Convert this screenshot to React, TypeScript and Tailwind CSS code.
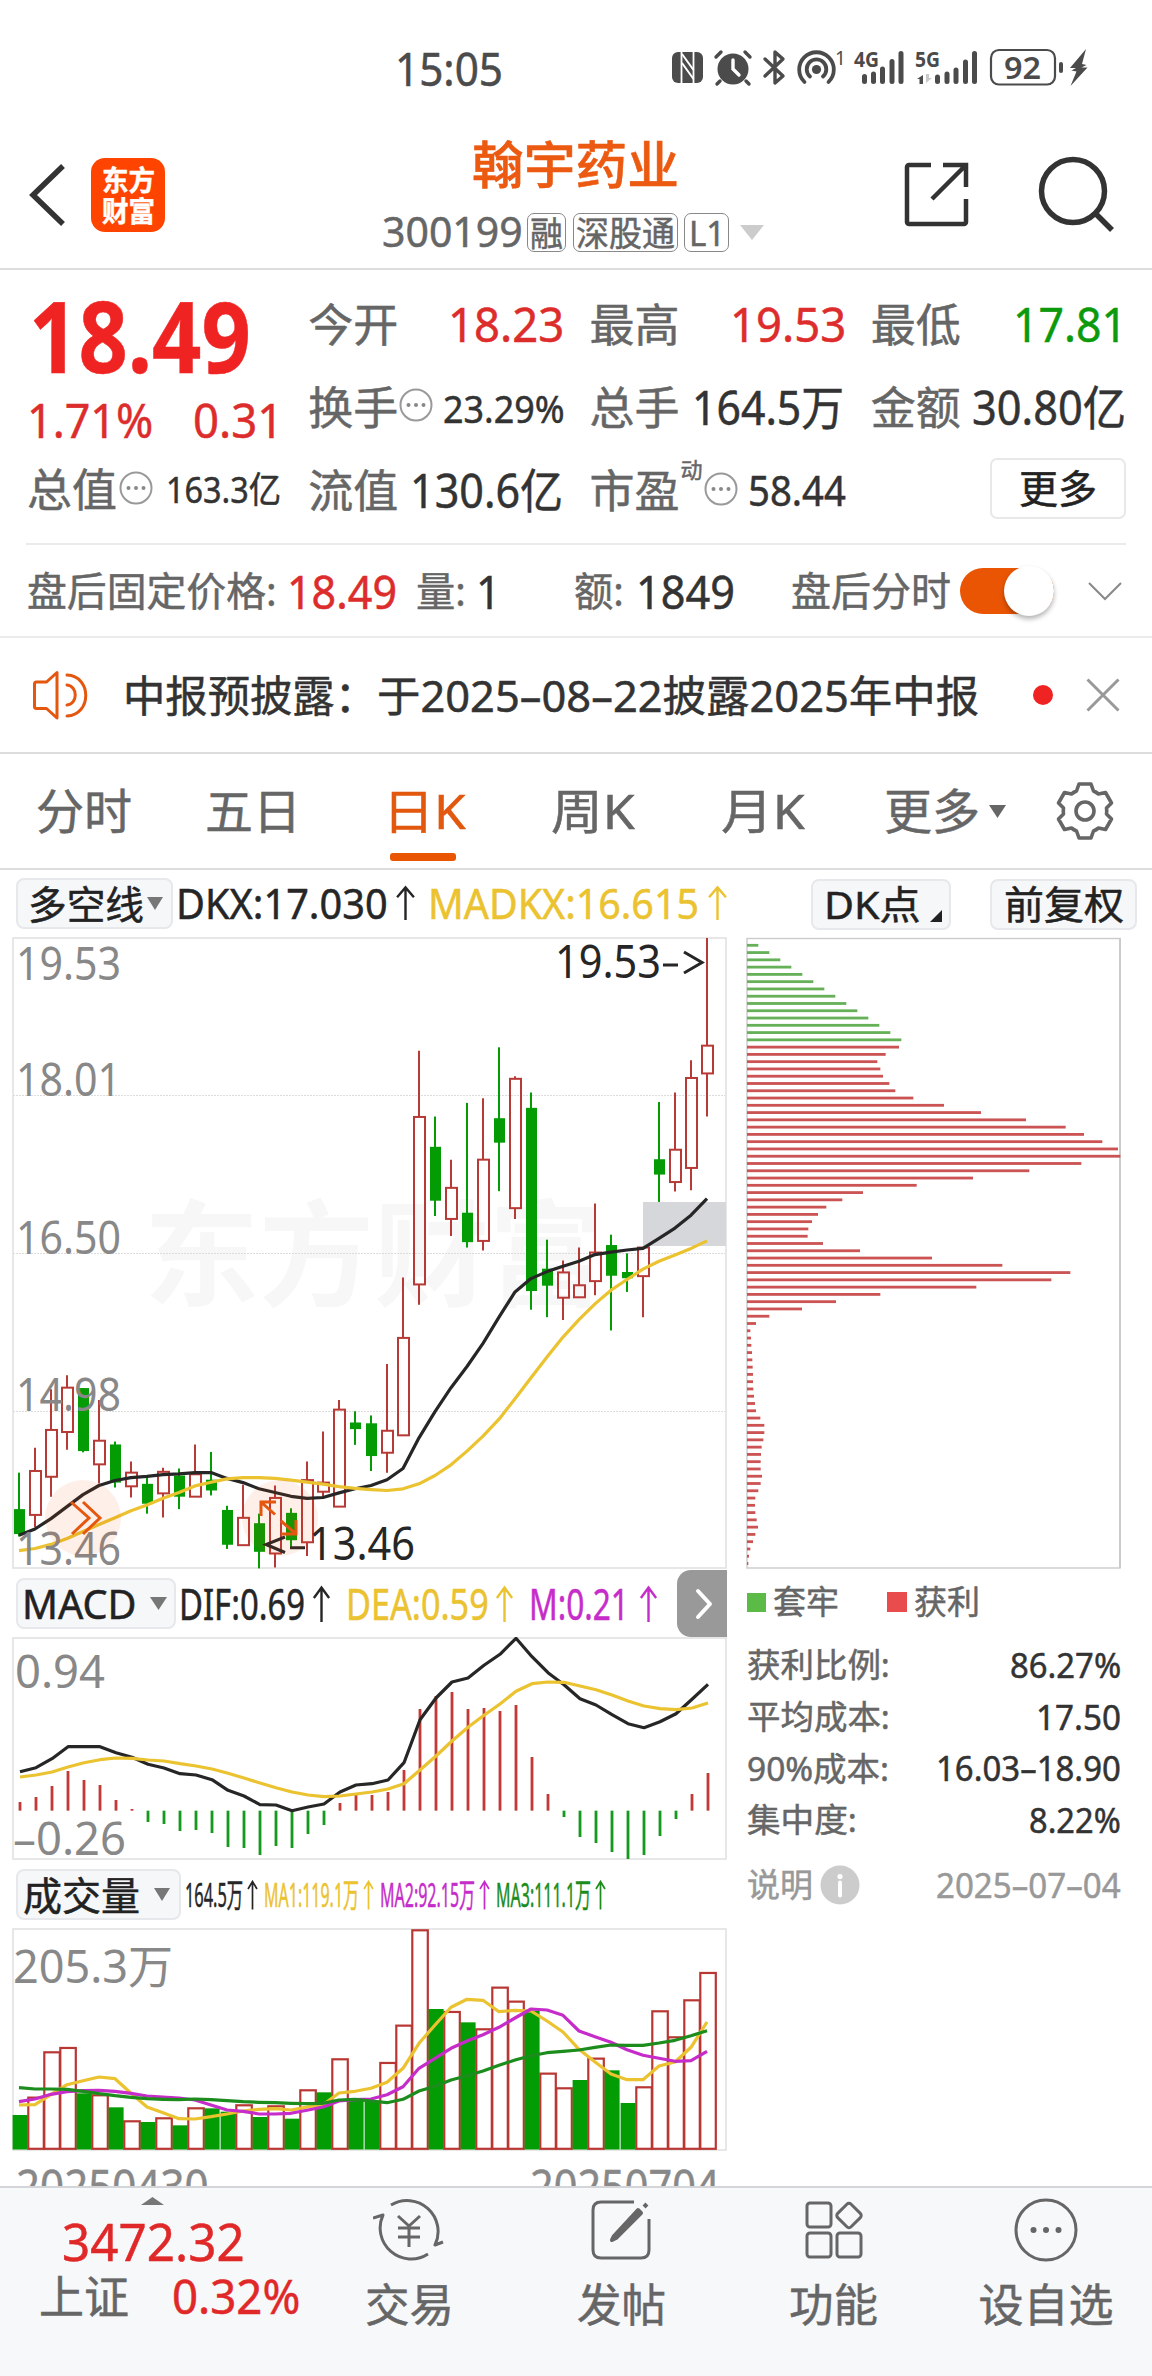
import { useLayoutEffect, useRef, useState } from 'react';
import type { ReactNode } from 'react';

/** Single-line text squeezed or stretched to a given width, so figures always fill their slot. */
function Fit({ w, className = '', children }: { w: number; className?: string; children: ReactNode }) {
  const ref = useRef<HTMLSpanElement>(null);
  const [scale, setScale] = useState(1);
  useLayoutEffect(() => {
    if (ref.current) setScale(w / ref.current.offsetWidth);
  }, [w]);
  return (
    <span className={`inline-block shrink-0 leading-none whitespace-nowrap ${className}`} style={{ width: w }}>
      <span ref={ref} className="inline-block origin-left leading-none" style={{ transform: `scaleX(${scale})` }}>
        {children}
      </span>
    </span>
  );
}

const RED = '#b83a36';
const GREEN = '#049c04';
const YELLOW = '#ebc22f';
const PURPLE = '#c62cc9';
const INK = '#262626';

/* ---------- price chart ---------- */

type Candle = [up: 0 | 1, high: number, low: number, top: number, bottom: number];
const candles: Candle[] = [
  [0, 1309, 1463, 1397, 1457], [1, 1249, 1440, 1305, 1411], [1, 1108, 1367, 1206, 1319], [1, 1074, 1254, 1104, 1211],
  [0, 1105, 1260, 1105, 1257], [1, 1134, 1335, 1232, 1289], [0, 1234, 1345, 1241, 1333], [1, 1282, 1369, 1309, 1342],
  [0, 1320, 1408, 1336, 1384], [1, 1297, 1417, 1307, 1359], [0, 1299, 1397, 1316, 1367], [1, 1241, 1367, 1313, 1367],
  [0, 1259, 1364, 1326, 1352], [0, 1389, 1493, 1399, 1483], [1, 1338, 1484, 1418, 1484], [0, 1408, 1540, 1431, 1500],
  [1, 1340, 1538, 1370, 1504], [0, 1395, 1488, 1406, 1472], [1, 1282, 1510, 1327, 1477], [1, 1210, 1369, 1333, 1355],
  [1, 1134, 1391, 1157, 1391], [0, 1161, 1242, 1188, 1204], [0, 1171, 1305, 1190, 1269], [1, 1047, 1309, 1208, 1261],
  [1, 838, 1219, 984, 1219], [1, 291, 904, 451, 855], [0, 450, 690, 523, 653], [1, 554, 738, 622, 697],
  [0, 417, 766, 682, 753], [1, 406, 773, 554, 750], [0, 283, 630, 454, 513], [1, 353, 697, 359, 671],
  [0, 392, 916, 429, 871], [0, 747, 934, 817, 858], [1, 797, 941, 826, 887], [1, 766, 886, 857, 886],
  [1, 660, 881, 778, 847], [0, 735, 966, 760, 834], [0, 780, 873, 825, 840], [1, 766, 934, 766, 835],
  [0, 415, 656, 553, 590], [1, 392, 631, 530, 608], [1, 314, 628, 357, 574], [1, 19, 450, 279, 346],
];
const dkx = [1460, 1445, 1420, 1391, 1362, 1340, 1328, 1321, 1318, 1314, 1312, 1309, 1309, 1323, 1333, 1348, 1357, 1366, 1371, 1369, 1358, 1348, 1340, 1326, 1299, 1225, 1162, 1104, 1053, 997, 934, 873, 841, 824, 811, 799, 783, 777, 772, 768, 744, 719, 688, 648];
const madkx = [1497, 1492, 1482, 1468, 1451, 1434, 1418, 1401, 1387, 1371, 1357, 1341, 1332, 1324, 1321, 1321, 1323, 1327, 1332, 1337, 1343, 1347, 1350, 1352, 1348, 1336, 1316, 1290, 1257, 1221, 1180, 1131, 1080, 1030, 982, 940, 902, 869, 843, 818, 799, 784, 768, 750];

const line = (vals: number[], x0: number, y: (v: number) => number) =>
  vals.map((v, i) => `${x0 + 16 * i},${y(v).toFixed(1)}`).join(' ');
const priceY = (v: number) => 930 + v / 2.4123;

function AxisLabel({ x, y, w, size = 45, fill = '#888', children }: { x: number; y: number; w: number; size?: number; fill?: string; children: string }) {
  return (
    <text x={x} y={y} fontSize={size} fill={fill} textLength={w} lengthAdjust="spacingAndGlyphs">
      {children}
    </text>
  );
}

function PriceChart() {
  return (
    <svg className="block h-[634px] w-[738px]" viewBox="0 936 738 634">
      <text x={144} y={1297} fontSize={115} fontWeight={700} fill="#f7f7f7" stroke="none" textLength={460} lengthAdjust="spacingAndGlyphs">
        东方财富
      </text>
      {[1095.5, 1253.5, 1411.5].map((y) => (
        <line key={y} x1={13} x2={725} y1={y} y2={y} stroke="#dcdcdc" strokeDasharray="2 1" />
      ))}
      <rect x={13} y={938} width={713} height={630} fill="none" stroke="#e2e2e2" strokeWidth={1.6} />
      <rect x={643} y={1202} width={83} height={44} fill="#d5d7db" />
      {candles.map(([up, hi, lo, top, bot], i) => {
        const x = 19 + 16 * i;
        return up ? (
          <g key={i} stroke={RED} strokeWidth={2}>
            <line x1={x} x2={x} y1={priceY(hi)} y2={priceY(top)} />
            <line x1={x} x2={x} y1={priceY(bot)} y2={priceY(lo)} />
            <rect x={x - 5} y={priceY(top)} width={11} height={priceY(bot) - priceY(top)} fill="#fff" fillOpacity={0} />
          </g>
        ) : (
          <g key={i} fill={GREEN}>
            <rect x={x - 1} y={priceY(hi)} width={2} height={priceY(lo) - priceY(hi)} />
            <rect x={x - 5} y={priceY(top)} width={11} height={priceY(bot) - priceY(top)} />
          </g>
        );
      })}
      <polyline points={line(dkx, 19, priceY)} fill="none" stroke={INK} strokeWidth={3.2} strokeLinejoin="round" />
      <polyline points={line(madkx, 19, priceY)} fill="none" stroke={YELLOW} strokeWidth={3.2} strokeLinejoin="round" />
      <AxisLabel x={16} y={980} w={105}>19.53</AxisLabel>
      <AxisLabel x={16} y={1096} w={105}>18.01</AxisLabel>
      <AxisLabel x={16} y={1254} w={105}>16.50</AxisLabel>
      <AxisLabel x={16} y={1411} w={105}>14.98</AxisLabel>
      <AxisLabel x={16} y={1565} w={105}>13.46</AxisLabel>
      <AxisLabel x={555} y={978} w={106} fill={INK}>19.53</AxisLabel>
      <AxisLabel x={309} y={1560} w={106} fill={INK}>13.46</AxisLabel>
      <g fill="none" stroke={INK} strokeWidth={3}>
        <path d="M663 965h15M684 952l18 10.5-18 10.5" />
        <path d="M305 1547.7h-15M285 1537l-19 7.5 19 8" />
      </g>
      <circle cx={83} cy={1518} r={38} fill="#f04a00" fillOpacity={0.09} />
      <circle cx={280} cy={1518} r={38} fill="#f04a00" fillOpacity={0.09} />
      <g fill="none" stroke="#e5570f" strokeWidth={3}>
        <path d="M71 1502l18 16-17 16M83 1502l17 16-17 16" />
        <path d="M261 1516v-14h15M261 1502l14 12.5M296 1520v14h-15M296 1534l-15-13" />
      </g>
    </svg>
  );
}

/* ---------- MACD ---------- */

const macdY = (v: number) => 1560 + v / 3;
const macdBars = [726, 711, 678, 633, 660, 675, 720, 747, 786, 792, 813, 810, 819, 861, 864, 885, 858, 864, 822, 795, 729, 702, 705, 696, 630, 447, 408, 396, 447, 444, 453, 435, 591, 702, 771, 831, 849, 876, 897, 885, 828, 777, 702, 639];
const dif = [635, 623, 596, 560, 560, 560, 578, 592, 613, 624, 641, 645, 659, 691, 708, 734, 735, 752, 741, 732, 696, 675, 671, 660, 608, 479, 414, 366, 354, 316, 283, 235, 290, 338, 374, 416, 435, 464, 491, 503, 485, 461, 418, 373];
const dea = [651, 645, 636, 621, 608, 599, 594, 595, 600, 603, 611, 618, 627, 640, 654, 669, 683, 696, 705, 710, 708, 702, 696, 687, 671, 630, 588, 543, 502, 466, 432, 394, 371, 366, 367, 378, 389, 405, 423, 438, 446, 449, 444, 429];

function MacdChart() {
  const zero = 752;
  return (
    <svg className="block h-[224px] w-[738px]" viewBox="0 1637 738 224">
      <rect x={13} y={1638} width={713} height={221} fill="none" stroke="#e2e2e2" strokeWidth={1.6} />
      <AxisLabel x={15} y={1688} w={90} size={46}>0.94</AxisLabel>
      <text x={13} y={1854.5} fontSize={46} fill="#888" textLength={23} lengthAdjust="spacingAndGlyphs">–</text>
      <AxisLabel x={36} y={1854.5} w={90} size={46}>0.26</AxisLabel>
      {macdBars.map((v, i) => {
        const up = v < zero;
        return (
          <rect key={i} x={18.6 + 16 * i} width={2.8} y={macdY(Math.min(v, zero))} height={Math.abs(v - zero) / 3} fill={up ? '#c23a36' : '#159a1b'} />
        );
      })}
      <polyline points={line(dif, 20, macdY)} fill="none" stroke={INK} strokeWidth={3.2} strokeLinejoin="round" />
      <polyline points={line(dea, 20, macdY)} fill="none" stroke={YELLOW} strokeWidth={3.2} strokeLinejoin="round" />
    </svg>
  );
}

/* ---------- volume ---------- */

const volY = (v: number) => 1860 + v / 3;
const volumes: [up: 0 | 1, top: number][] = [
  [0, 765], [1, 712], [1, 576], [1, 563], [0, 700], [1, 705], [0, 742], [1, 783], [0, 786], [1, 774], [0, 796],
  [1, 744], [0, 745], [0, 755], [1, 735], [0, 771], [1, 738], [0, 776], [1, 690], [0, 697], [1, 597], [0, 718],
  [0, 722], [1, 608], [1, 496], [1, 210], [0, 447], [1, 455], [0, 487], [1, 507], [1, 382], [1, 424], [0, 452],
  [1, 640], [1, 684], [0, 660], [1, 595], [0, 631], [0, 729], [1, 681], [1, 453], [1, 531], [1, 420], [1, 338],
];
const ma1 = [735, 734, 703, 674, 662, 651, 656, 700, 741, 758, 776, 777, 770, 762, 753, 748, 746, 750, 741, 734, 699, 694, 685, 667, 625, 550, 495, 442, 418, 421, 455, 451, 453, 483, 516, 568, 606, 642, 659, 659, 618, 606, 562, 486];
const ma2 = [725, 717, 703, 695, 692, 691, 694, 700, 708, 711, 714, 720, 735, 750, 754, 762, 762, 760, 751, 741, 723, 719, 717, 704, 680, 625, 595, 565, 543, 524, 502, 474, 447, 450, 466, 513, 530, 547, 569, 586, 595, 604, 602, 574];
const ma3 = [683, 687, 687, 688, 694, 701, 707, 712, 716, 718, 719, 717, 719, 722, 725, 727, 728, 730, 731, 730, 720, 718, 723, 728, 718, 693, 679, 660, 647, 633, 616, 600, 587, 578, 574, 570, 562, 555, 556, 556, 549, 541, 527, 512];

function VolumeChart() {
  return (
    <svg className="block h-[224px] w-[738px]" viewBox="0 1928 738 224">
      <rect x={13} y={1929} width={713} height={221} fill="none" stroke="#e2e2e2" strokeWidth={1.6} />
      <AxisLabel x={13} y={1983} w={160} size={46}>205.3万</AxisLabel>
      {volumes.map(([up, v], i) => {
        const x = 19.8 + 16 * i;
        return up ? (
          <rect key={i} x={x - 7.5} y={volY(v) + 0.3} width={15.5} height={2148.5 - volY(v)} fill="#fff" stroke="#b93733" strokeWidth={2.2} />
        ) : (
          <rect key={i} x={x - 7.2} y={volY(v)} width={15} height={2149.5 - volY(v)} fill={GREEN} />
        );
      })}
      <g fill="none" strokeWidth={3.2} strokeLinejoin="round">
        <polyline points={line(ma1, 19, volY)} stroke={YELLOW} />
        <polyline points={line(ma2, 19, volY)} stroke={PURPLE} />
        <polyline points={line(ma3, 19, volY)} stroke="#1c8c1c" />
      </g>
    </svg>
  );
}

/* ---------- cost distribution ---------- */

const lossBars = [84, 117, 150, 183, 216, 249, 282, 315, 348, 381, 414, 447, 480, 513];
const gainBars = [
  506, 466, 441, 450, 458, 477, 495, 549, 641, 752, 887, 1006, 1061, 1116, 1163, 1170, 1053, 897, 728, 559, 398, 336, 288, 263,
  245, 234, 232, 278, 389, 605, 816, 1020, 963, 738, 450, 317, 215, 117, 77, 60, 62, 63, 65, 66, 67, 68, 68, 69, 71, 74, 77, 90,
  102, 102, 99, 94, 92, 91, 91, 95, 91, 84, 75, 74, 75, 79, 83, 75, 68, 60, 56, 54,
];

function CostChart() {
  return (
    <svg className="block h-[634px] w-[414px]" viewBox="738 936 414 634">
      <rect x={747} y={938.5} width={373} height={629.5} fill="none" stroke="#cbcbcb" strokeWidth={1.4} />
      <line x1={1120} x2={1120} y1={938} y2={1568} stroke="#cbcbcb" strokeWidth={2} />
      {[...lossBars, ...gainBars].map((v, i) => (
        <rect key={i} x={747} y={943.9 + i * 7.273} width={(v - 50) / 3} height={2.8} fill={i < lossBars.length ? '#66b058' : '#cc5353'} />
      ))}
    </svg>
  );
}

/* ---------- small glyphs ---------- */

function UpArrow({ className }: { className: string }) {
  return (
    <svg className={`shrink-0 ${className}`} viewBox="0 0 20 38" preserveAspectRatio="none" fill="none" stroke="currentColor" strokeWidth={2.4}>
      <path d="M10 37V3M2 13l8-10.5L18 13" vectorEffect="non-scaling-stroke" />
    </svg>
  );
}

function ThinArrow() {
  return (
    <svg className="ml-[4px] h-[30px] w-[11px] shrink-0" viewBox="0 0 11 30" fill="none" stroke="currentColor" strokeWidth={1.7}>
      <path d="M5.500 29.500V2M1 9l4.500-7.500L10 9" />
    </svg>
  );
}

function Down({ className }: { className: string }) {
  return (
    <svg className={`shrink-0 ${className}`} viewBox="0 0 16 12" preserveAspectRatio="none" fill="currentColor">
      <path d="M0 0h16L8 12z" />
    </svg>
  );
}

function Dots() {
  return (
    <svg className="size-[34px] shrink-0" viewBox="0 0 34 34" fill="none" stroke="#999" strokeWidth={2}>
      <circle cx={17} cy={17} r={15.5} />
      <g fill="#888" stroke="none">
        <circle cx={9.5} cy={17} r={2} />
        <circle cx={17} cy={17} r={2} />
        <circle cx={24.5} cy={17} r={2} />
      </g>
    </svg>
  );
}

function StatusIcons() {
  return (
    <svg className="h-[40px] w-[420px] overflow-visible" viewBox="670 48 420 40" fill="#4b4b4b">
      {/* NFC */}
      <rect x={672} y={52} width={31} height={31} rx={6} />
      <path d="M681.500 52v31M693.500 52v31" stroke="#fff" strokeWidth={1.8} />
      <path d="M682 54l11.500 16M682 63l11.500 16" stroke="#fff" strokeWidth={2} />
      {/* alarm */}
      <circle cx={733} cy={69} r={15.5} />
      <path d="M720 81l-3 3M746 81l3 3M716 57l5-5M750 57l-5-5" stroke="#4b4b4b" strokeWidth={3.4} strokeLinecap="round" />
      <path d="M733 60v9l6 6" stroke="#fff" strokeWidth={3.4} fill="none" strokeLinecap="round" />
      {/* bluetooth */}
      <path d="M765 59l18 17-8 7V52l8 7-18 17" stroke="#4b4b4b" strokeWidth={3.4} fill="none" strokeLinejoin="round" strokeLinecap="round" />
      {/* hotspot */}
      <circle cx={816.500} cy={69.500} r={4.600} />
      <g fill="none" stroke="#4b4b4b" strokeWidth={3.8} strokeLinecap="round">
        <path d="M810 76.500a9.800 9.800 0 1 1 13 0" />
        <path d="M804.500 82a17.300 17.300 0 1 1 24 0" />
      </g>
      <text x={835} y={65} fontSize={19}>1</text>
      {/* signals */}
      <text x={854} y={67} fontSize={22} fontWeight={700} textLength={25} lengthAdjust="spacingAndGlyphs">4G</text>
      <text x={915} y={67} fontSize={22} fontWeight={700} textLength={25} lengthAdjust="spacingAndGlyphs">5G</text>
      <g stroke="#4b4b4b" strokeWidth={5} strokeLinecap="round">
        <path d="M864.500 76.500v5M873.500 74v7.500M882.500 69v12.500M892 61.500v20M901 53.500v28" />
        <path d="M937.500 77v4.500M947 74v7.500M956 70v11.500M965.500 62v19.500M974.500 53.500v28" />
      </g>
      <path d="M919.500 84v-5h-2.500l6-4v9z" />
      <path d="M926 74v9l6-5h-3v-4z" fill="#c9c9c9" />
      {/* battery */}
      <rect x={991} y={50} width={64} height={34.500} rx={8} fill="none" stroke="#4b4b4b" strokeWidth={2.200} />
      <text x={1004} y={79} fontSize={30} fontWeight={600} textLength={37} lengthAdjust="spacingAndGlyphs">92</text>
      <rect x={1059} y={62} width={4} height={11} rx={2} />
      <path d="M1086 49l-16 19h6l-4.500 2.500 5 1-6 14.500 17-18.500h-6l5-2.500-4.500-1z" />
    </svg>
  );
}

/* ---------- page ---------- */

function Header() {
  return (
    <header className="flex h-[152px] border-b-2 border-[#dcdcdc]">
      <svg className="mt-[46px] ml-[28px] h-[62px] w-[38px]" viewBox="0 0 38 62" fill="none" stroke="#333" strokeWidth={5.500}>
        <path d="M35 2L5 31l30 29" />
      </svg>
      <div className="mt-[40px] ml-[25px] flex h-[74px] w-[74px] flex-col items-center justify-center gap-[3px] rounded-[14px] bg-[#ff4400] text-[28px] font-bold text-white">
        <Fit w={53}>东方</Fit>
        <Fit w={53}>财富</Fit>
      </div>
      <div className="mt-[21px] ml-[217px] flex w-[387px] flex-col">
        <Fit w={207} className="ml-[90px] text-[51px] font-medium text-[#ec5a12]">翰宇药业</Fit>
        <div className="mt-[23px] flex h-[39px] items-center text-[34px] text-[#666]">
          <Fit w={141} className="text-[41px] -mt-[2px]">300199</Fit>
          <span className="ml-[4px] flex h-[39px] w-[39px] items-center justify-center rounded-[7px] border border-[#888]"><Fit w={33}>融</Fit></span>
          <span className="ml-[7px] flex h-[39px] w-[105px] items-center justify-center rounded-[7px] border border-[#888]"><Fit w={99}>深股通</Fit></span>
          <span className="ml-[6px] flex h-[39px] w-[45px] items-center justify-center rounded-[7px] border border-[#888]"><Fit w={36}>L1</Fit></span>
          <Down className="ml-[11px] h-[15px] w-[24px] text-[#ccc]" />
        </div>
      </div>
      <svg className="mt-[40px] ml-[134px] h-[72px] w-[68px]" viewBox="904 158 68 72" fill="none" stroke="#333" strokeWidth={4.500}>
        <path d="M932 165h-22a2 2 0 0 0-2 2v55a2 2 0 0 0 2 2h55a2 2 0 0 0 2-2v-23M944 165h23v22M966 166l-33 33" />
      </svg>
      <svg className="mt-[36px] ml-[64px] h-[80px] w-[82px]" viewBox="1036 154 82 80" fill="none" stroke="#333" strokeWidth={5.500}>
        <circle cx={1074} cy={191} r={31.500} />
        <path d="M1096 213l17 17" />
      </svg>
    </header>
  );
}

function Cell({ label, children, className = '' }: { label: string; children: ReactNode; className?: string }) {
  return (
    <div className={`flex h-[83px] items-center ${className}`}>
      <Fit w={90} className="text-[45px] text-[#666]">{label}</Fit>
      {children}
    </div>
  );
}

function Quotes() {
  return (
    <section className="grid h-[274px] grid-cols-4 gap-x-[27px] px-[27px] pt-[13px] text-[#333]">
      <div className="flex flex-col">
        <Fit w={222} className="mt-[3px] ml-[2px] text-[98px] font-bold text-[#f02323]">18.49</Fit>
        <div className="mt-[12px] flex justify-between text-[48px] text-[#dd2c2c]">
          <Fit w={126}>1.71%</Fit>
          <Fit w={90} className="-mr-[2px]">0.31</Fit>
        </div>
        <div className="mt-[4px] flex h-[83px] items-center">
          <Fit w={90} className="text-[45px] text-[#666]">总值</Fit>
          <span className="ml-[2px] -mt-[4px] flex"><Dots /></span>
          <Fit w={115} className="ml-auto text-[36px]">163.3亿</Fit>
        </div>
      </div>
      <div>
        <Cell label="今开"><Fit w={116} className="-mr-[1px] ml-auto text-[47px] text-[#dd2c2c]">18.23</Fit></Cell>
        <Cell label="换手">
          <span className="ml-[1px] -mt-[6px] flex"><Dots /></span>
          <Fit w={122} className="-mr-[2px] ml-auto text-[38px]">23.29%</Fit>
        </Cell>
        <Cell label="流值"><Fit w={153} className="ml-auto text-[47px]">130.6亿</Fit></Cell>
      </div>
      <div>
        <Cell label="最高"><Fit w={116} className="-mr-[2px] ml-auto text-[47px] text-[#dd2c2c]">19.53</Fit></Cell>
        <Cell label="总手"><Fit w={152} className="ml-auto text-[47px]">164.5万</Fit></Cell>
        <Cell label="市盈">
          <Fit w={22} className="ml-[1px] -mt-[44px] text-[22px] text-[#666]">动</Fit>
          <span className="ml-[1px] -mt-[4px] flex"><Dots /></span>
          <Fit w={98} className="-mr-[2px] ml-auto text-[41px]">58.44</Fit>
        </Cell>
      </div>
      <div>
        <Cell label="最低"><Fit w={114} className="-mr-[2px] ml-auto text-[47px] text-[#0c9a0c]">17.81</Fit></Cell>
        <Cell label="金额"><Fit w={154} className="-mr-[1px] ml-auto text-[47px]">30.80亿</Fit></Cell>
        <div className="mt-[9px] -mr-[1px] ml-auto flex h-[61px] w-[136px] items-center justify-center rounded-[7px] border-2 border-[#e8e8e8]">
          <Fit w={78} className="-mt-[2px] text-[39px] text-[#222]">更多</Fit>
        </div>
      </div>
    </section>
  );
}

function AfterHours() {
  return (
    <section className="flex h-[93px] items-center border-b-2 border-[#ebebeb] pt-[1px] pl-[27px] text-[40px] text-[#666]">
      <Fit w={250}>盘后固定价格:</Fit>
      <Fit w={110} className="ml-[10px] text-[45px] text-[#dd2c2c]">18.49</Fit>
      <Fit w={50} className="ml-[19px]">量:</Fit>
      <Fit w={25} className="ml-[10px] text-[45px] text-[#333]">1</Fit>
      <Fit w={50} className="ml-[73px]">额:</Fit>
      <Fit w={99} className="ml-[12px] text-[45px] text-[#333]">1849</Fit>
      <Fit w={160} className="ml-[56px]">盘后分时</Fit>
      <div className="ml-[9px] flex h-[46px] w-[94px] items-center justify-end rounded-full bg-[#ea5504]">
        <div className="h-[50px] w-[50px] rounded-full bg-white shadow-[0_3px_5px_rgba(0,0,0,0.3)]" />
      </div>
      <svg className="ml-[33px] h-[20px] w-[36px]" viewBox="0 0 36 20" fill="none" stroke="#888" strokeWidth={2}>
        <path d="M2 2l16 16L34 2" />
      </svg>
    </section>
  );
}

function Notice() {
  return (
    <section className="flex h-[116px] items-center border-b-2 border-[#dcdcdc] pl-[31px]">
      <svg className="h-[52px] w-[58px]" viewBox="31 669 58 52" fill="none" stroke="#e5570f" strokeWidth={3} strokeLinejoin="round">
        <path d="M34.500 684q0-2 2-2h10l10.500-9.500V718l-10.500-9.500h-10q-2 0-2-2z" />
        <path d="M67 675c25 1 25 40 0 41M67 685c11 1 11 19 0 20" strokeLinecap="round" />
      </svg>
      <Fit w={254} className="ml-[34px] text-[43px] text-[#333]">中报预披露：</Fit>
      <Fit w={602} className="text-[43px] text-[#333]">于2025–08–22披露2025年中报</Fit>
      <span className="ml-[54px] size-[20px] rounded-full bg-[#f02323]" />
      <svg className="ml-[33px] size-[34px]" viewBox="0 0 34 34" stroke="#999" strokeWidth={3}>
        <path d="M1.500 1.500l31 31M32.500 1.500l-31 31" />
      </svg>
    </section>
  );
}

function Tabs() {
  return (
    <nav className="flex h-[116px] items-center border-b-2 border-[#dcdcdc] pl-[36px] text-[48px] text-[#666]">
      <Fit w={96}>分时</Fit>
      <Fit w={96} className="ml-[73px]">五日</Fit>
      <span className="relative ml-[82px] flex text-[#e2580f]">
        <Fit w={83}>日K</Fit>
        <span className="absolute top-[66px] left-[7px] h-[8px] w-[66px] rounded-[3px] bg-[#ea5504]" />
      </span>
      <Fit w={84} className="ml-[85px]">周K</Fit>
      <Fit w={84} className="ml-[86px]">月K</Fit>
      <Fit w={96} className="ml-[79px]">更多</Fit>
      <Down className="ml-[9px] h-[13px] w-[17px]" />
      <svg className="ml-[48px] size-[62px]" viewBox="-31 -31 62 62" fill="none" stroke="#666" strokeWidth={3.600} strokeLinejoin="round">
        <path d="M-6-27H6L8.500-20Q11-19 13.500-17L20.500-18.500L26.500-8L21.500-3Q22 0 21.500 3L26.500 8L20.500 18.500L13.500 17Q11 19 8.500 20L6 27H-6L-8.500 20Q-11 19-13.500 17L-20.500 18.500L-26.500 8L-21.500 3Q-22 0-21.500-3L-26.500-8L-20.500-18.500L-13.500-17Q-11-19-8.500-20Z" />
        <circle r={9} />
      </svg>
    </nav>
  );
}

const pill = 'flex items-center shrink-0 rounded-[8px] border-2 border-[#e6e8eb] bg-[#f6f7f9] text-[#222]';

function IndicatorBar() {
  return (
    <div className="flex h-[66px] items-center pl-[16px] text-[41px] text-[#262626]">
      <div className={`${pill} h-[51px] w-[157px] pl-[10px] text-[39px]`}>
        <Fit w={116}>多空线</Fit>
        <Down className="ml-[3px] h-[13px] w-[16px] text-[#777]" />
      </div>
      <Fit w={212} className="ml-[3px]">DKX:17.030</Fit>
      <UpArrow className="ml-[7px] h-[36px] w-[21px]" />
      <span className="ml-[12px] flex items-center text-[#ebc22f]">
        <Fit w={271}>MADKX:16.615</Fit>
        <UpArrow className="ml-[8px] h-[36px] w-[21px]" />
      </span>
      <div className={`${pill} mt-[2px] ml-[83px] h-[51px] w-[140px] pl-[11px] text-[39px]`}>
        <Fit w={97} className="-mt-[2px]">DK点</Fit>
        <svg className="mt-[24px] ml-[9px] size-[12px]" viewBox="0 0 12 12"><path d="M12 0v12H0z" fill="#222" /></svg>
      </div>
      <div className={`${pill} mt-[2px] ml-[39px] h-[51px] w-[147px] justify-center text-[39px]`}>
        <Fit w={120} className="-mt-[2px]">前复权</Fit>
      </div>
    </div>
  );
}

function MacdBar() {
  return (
    <div className="flex h-[67px] items-center pl-[16px] text-[43px] text-[#262626]">
      <div className={`${pill} h-[51px] w-[160px] pl-[4px] text-[40px]`}>
        <Fit w={115}>MACD</Fit>
        <Down className="ml-[13px] h-[13px] w-[17px] text-[#777]" />
      </div>
      <Fit w={126} className="ml-[3px]">DIF:0.69</Fit>
      <UpArrow className="ml-[7px] h-[38px] w-[19px]" />
      <span className="ml-[15px] flex items-center text-[#ebc22f]">
        <Fit w={143}>DEA:0.59</Fit>
        <UpArrow className="ml-[6px] h-[38px] w-[19px]" />
      </span>
      <span className="ml-[15px] flex items-center text-[#c62cc9]">
        <Fit w={100}>M:0.21</Fit>
        <UpArrow className="ml-[10px] h-[38px] w-[19px]" />
      </span>
      <div className="ml-auto mr-[11px] flex h-[67px] w-[50px] items-center justify-center rounded-l-[14px] bg-[#999]">
        <svg className="ml-[4px] h-[34px] w-[20px]" viewBox="0 0 20 34" fill="none" stroke="#fff" strokeWidth={4} strokeLinecap="round" strokeLinejoin="round">
          <path d="M4 4l12 13L4 30" />
        </svg>
      </div>
    </div>
  );
}

function VolumeBar() {
  return (
    <div className="flex h-[67px] items-center pl-[16px] text-[33px] text-[#262626]">
      <div className={`${pill} h-[51px] w-[165px] pl-[5px] text-[39px]`}>
        <Fit w={117}>成交量</Fit>
        <Down className="ml-[14px] h-[13px] w-[16px] text-[#777]" />
      </div>
      <Fit w={58} className="ml-[4px]">164.5万</Fit>
      <ThinArrow />
      <span className="ml-[6px] flex items-center text-[#ebc22f]">
        <Fit w={95}>MA1:119.1万</Fit>
        <ThinArrow />
      </span>
      <span className="ml-[6px] flex items-center text-[#c62cc9]">
        <Fit w={95}>MA2:92.15万</Fit>
        <ThinArrow />
      </span>
      <span className="ml-[6px] flex items-center text-[#1c8c1c]">
        <Fit w={95}>MA3:111.1万</Fit>
        <ThinArrow />
      </span>
    </div>
  );
}

function CostRow({ label, lw, value, vw }: { label: string; lw: number; value: string; vw: number }) {
  return (
    <div className="flex h-[51.700px] items-center justify-between">
      <Fit w={lw} className="text-[33px] text-[#666]">{label}</Fit>
      <Fit w={vw} className="text-[34px] text-[#333]">{value}</Fit>
    </div>
  );
}

function CostPanel() {
  return (
    <div className="w-[414px]">
      <CostChart />
      <div className="pr-[31px] pl-[9px]">
        <div className="mt-[14px] flex h-[34px] items-center text-[33px] text-[#666]">
          <span className="mt-[2px] size-[19px] bg-[#5cba47]" />
          <Fit w={66} className="ml-[7px]">套牢</Fit>
          <span className="mt-[2px] ml-[48px] size-[20px] bg-[#e84c4c]" />
          <Fit w={66} className="ml-[7px]">获利</Fit>
        </div>
        <div className="mt-[21px]">
          <CostRow label="获利比例:" lw={143} value="86.27%" vw={111} />
          <CostRow label="平均成本:" lw={143} value="17.50" vw={85} />
          <CostRow label="90%成本:" lw={142} value="16.03–18.90" vw={185} />
          <CostRow label="集中度:" lw={110} value="8.22%" vw={92} />
        </div>
        <div className="mt-[16px] flex h-[46px] items-center text-[#999]">
          <Fit w={66} className="text-[33px]">说明</Fit>
          <svg className="ml-[7px] size-[40px]" viewBox="0 0 40 40">
            <circle cx={20} cy={20} r={19.500} fill="#ccc" />
            <circle cx={20} cy={11.500} r={2.600} fill="#fff" />
            <path d="M20 17.500v13" stroke="#fff" strokeWidth={4} strokeLinecap="round" />
          </svg>
          <Fit w={185} className="ml-auto text-[34px]">2025–07–04</Fit>
        </div>
      </div>
    </div>
  );
}

function NavItem({ label, w, children }: { label: string; w: number; children: ReactNode }) {
  return (
    <div className="flex flex-1 flex-col items-center pt-[6px]">
      <svg className="size-[72px]" viewBox="-36 -36 72 72" fill="none" stroke="#666" strokeWidth={3} strokeLinejoin="round">
        {children}
      </svg>
      <Fit w={w} className="mt-[16px] text-[45px] text-[#666]">{label}</Fit>
    </div>
  );
}

function BottomNav() {
  return (
    <footer className="flex h-[190px] border-t-2 border-[#d3d5d9] bg-[#f7f8fa]">
      <div className="flex w-[303px] flex-col pt-[9px] text-[#e02828]">
        <svg className="ml-[141px] h-[8px] w-[23px]" viewBox="0 0 23 8"><path d="M11.500 0L23 8H0z" fill="#777" /></svg>
        <Fit w={183} className="mt-[11px] ml-[62px] text-[51px]">3472.32</Fit>
        <div className="mt-[6px] ml-[39px] flex items-center">
          <Fit w={90} className="text-[45px] text-[#666]">上证</Fit>
          <Fit w={128} className="ml-[43px] text-[47px]">0.32%</Fit>
        </div>
      </div>
      <NavItem label="交易" w={89}>
        <path d="M-18-25A31 31 0 0 1 26 15L34 12M-36-12L-26-15A31 31 0 0 0 19 24" />
        <path d="M-11-14L0-4L11-14M-11-2H11M-11 7H11M0-4V17" />
      </NavItem>
      <NavItem label="发帖" w={89}>
        <path d="M13-28H-20Q-28-28-28-20V20Q-28 28-20 28H20Q28 28 28 20V-11" />
        <path d="M17-20L20-17L-5 8L-9 10L-7 6ZM23-26L26-23" strokeWidth={4} fill="#666" />
      </NavItem>
      <NavItem label="功能" w={89}>
        <rect x={-27} y={-27} width={24} height={24} rx={3} />
        <rect x={-27} y={3} width={24} height={24} rx={3} />
        <rect x={3} y={3} width={24} height={24} rx={3} />
        <rect x={5.500} y={-24} width={19} height={19} rx={3} transform="rotate(45 15 -14.500)" />
      </NavItem>
      <NavItem label="设自选" w={135}>
        <circle r={30} />
        <g fill="#666" stroke="none">
          <circle cx={-12.500} r={3} />
          <circle r={3} />
          <circle cx={12.500} r={3} />
        </g>
      </NavItem>
    </footer>
  );
}

export default function App() {
  return (
    <div className="flex h-[2376px] w-[1152px] flex-col overflow-hidden bg-white font-['Noto_Sans','Noto_Sans_CJK_SC',sans-serif] [-webkit-text-stroke-width:0.5px]">
      <div className="flex h-[118px] items-center pt-[18px] pl-[395px]">
        <Fit w={108} className="text-[45px] text-[#4b4b4b]">15:05</Fit>
        <div className="ml-[167px] flex"><StatusIcons /></div>
      </div>
      <Header />
      <Quotes />
      <div className="mx-[26px] -mt-[1px] h-[2px] shrink-0 bg-[#ebebeb]" />
      <AfterHours />
      <Notice />
      <Tabs />
      <IndicatorBar />
      <div className="flex h-[1250px] overflow-hidden">
        <div className="w-[738px]">
          <PriceChart />
          <MacdBar />
          <MacdChart />
          <VolumeBar />
          <VolumeChart />
          <div className="flex h-[34px] items-start overflow-hidden pt-[10px] pl-[16px] text-[46px] text-[#888]">
            <Fit w={193}>20250430</Fit>
            <Fit w={190} className="ml-[321px]">20250704</Fit>
          </div>
        </div>
        <CostPanel />
      </div>
      <BottomNav />
    </div>
  );
}
